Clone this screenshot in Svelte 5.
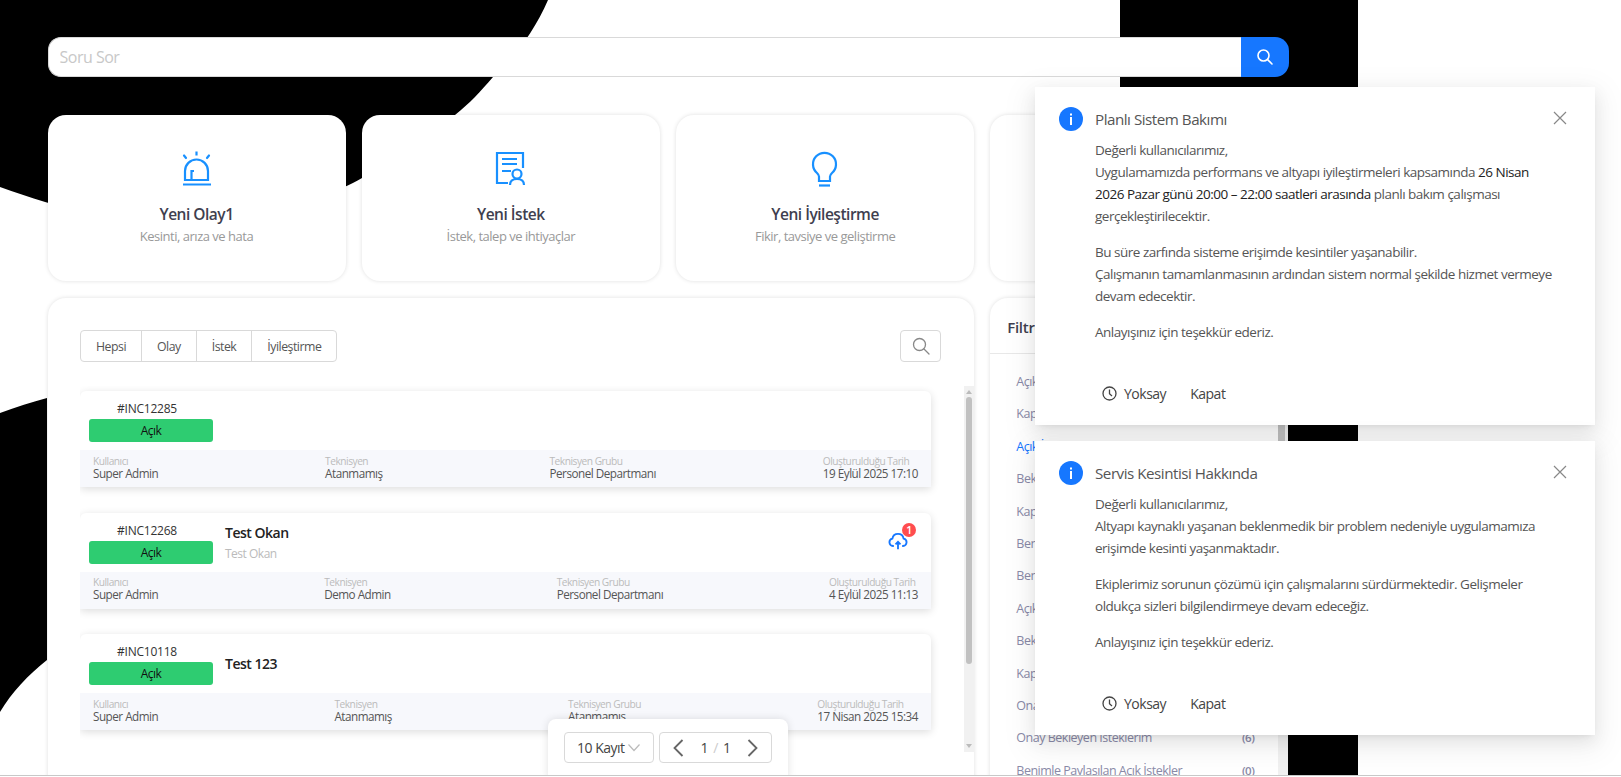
<script>
  const shortcuts = [
    { title: 'Yeni Olay1', sub: 'Kesinti, arıza ve hata', icon: 'alert' },
    { title: 'Yeni İstek', sub: 'İstek, talep ve ihtiyaçlar', icon: 'doc' },
    { title: 'Yeni İyileştirme', sub: 'Fikir, tavsiye ve geliştirme', icon: 'bulb' },
    { title: '', sub: '', icon: '' }
  ];

  const tabs = ['Hepsi', 'Olay', 'İstek', 'İyileştirme'];

  const tickets = [
    { id: '#INC12285', title: '', sub: '', user: 'Super Admin', tech: 'Atanmamış', group: 'Personel Departmanı', date: '19 Eylül 2025 17:10' },
    { id: '#INC12268', title: 'Test Okan', sub: 'Test Okan', user: 'Super Admin', tech: 'Demo Admin', group: 'Personel Departmanı', date: '4 Eylül 2025 11:13', files: 1 },
    { id: '#INC10118', title: 'Test 123', sub: '', user: 'Super Admin', tech: 'Atanmamış', group: 'Atanmamış', date: '17 Nisan 2025 15:34' }
  ];

  const filters = [
    { label: 'Açık Olaylarım', count: 0 },
    { label: 'Kapalı Olaylarım', count: 0 },
    { label: 'Açık İsteklerim', count: 0, active: true },
    { label: 'Bekleyen İsteklerim', count: 0 },
    { label: 'Kapalı İsteklerim', count: 0 },
    { label: 'Benim Açtıklarım', count: 0 },
    { label: 'Benim Kapattıklarım', count: 0 },
    { label: 'Açık İyileştirmeler', count: 0 },
    { label: 'Bekleyen İyileştirmeler', count: 0 },
    { label: 'Kapalı İyileştirmeler', count: 0 },
    { label: 'Onay Bekleyen Olaylarım', count: 0 },
    { label: 'Onay Bekleyen İsteklerim', count: 6 },
    { label: 'Benimle Paylaşılan Açık İstekler', count: 0 }
  ];
</script>

<div class="page">
  <svg class="backdrop" viewBox="0 0 1621 777" width="1621" height="777" aria-hidden="true">
    <path d="M0 0H548C535 30 512 62 493 77C480 92 470 103 455 115C430 145 395 165 362 178C330 196 260 225 190 226C120 226 60 208 0 187Z" />
    <path d="M0 413C16 407 32 402 47 398V660C28 675 12 692 0 712Z" />
    <rect x="1120" y="0" width="238" height="777" />
  </svg>

  <main class="content">
    <div class="ask">
      <input placeholder="Soru Sor" />
      <button aria-label="Ara">
        <svg width="18" height="18" viewBox="0 0 18 18" fill="none" stroke="#fff" stroke-width="1.6">
          <circle cx="7.5" cy="7.5" r="5.5" />
          <path d="M11.6 11.6 16 16" stroke-linecap="round" />
        </svg>
      </button>
    </div>

    <div class="shortcuts">
      {#each shortcuts as s}
        <div class="shortcut">
          {#if s.icon === 'alert'}
            <svg class="glyph" width="30" height="36" viewBox="0 0 30 36">
              <path d="M3 29V20a11.5 11.5 0 0 1 23 0V29Z M9.5 29V20H12" />
              <path d="M1 33.5H29 M14.5 0.5V4.5" />
              <path d="M2 4.5 4 7 M27 4.5 25 7" stroke-linecap="round" />
            </svg>
          {:else if s.icon === 'doc'}
            <svg class="glyph" width="32" height="36" viewBox="0 0 32 36">
              <path d="M13 32H2V2H28V17" />
              <path d="M7 8H22 M7 13H22 M7 20H16" />
              <circle cx="22" cy="23" r="4.5" />
              <path d="M15 34c0-4 3-6 7-6s7 2 7 6" />
            </svg>
          {:else if s.icon === 'bulb'}
            <svg class="glyph" width="32" height="36" viewBox="0 0 32 36">
              <path d="M10 30h11v-4.5c0-1.5 1-2.5 2-3.5a11.5 11.5 0 1 0-15 0c1 1 2 2 2 3.5z" />
              <path d="M10 34.5H21" />
            </svg>
          {/if}
          {#if s.title}
            <div class="shortcut-title">{s.title}</div>
            <div class="shortcut-sub">{s.sub}</div>
          {/if}
        </div>
      {/each}
    </div>

    <div class="columns">
      <section class="tickets">
        <div class="toolbar">
          <div class="tabs">
            {#each tabs as tab}
              <button>{tab}</button>
            {/each}
          </div>
          <button class="find" aria-label="Bul">
            <svg width="18" height="18" viewBox="0 0 18 18" fill="none" stroke="#888" stroke-width="1.3">
              <circle cx="7.5" cy="7.5" r="6" />
              <path d="M12 12 17 17" stroke-linecap="round" />
            </svg>
          </button>
        </div>

        <div class="scroller">
          <div class="list">
            {#each tickets as t}
              <article class="ticket">
                <div class="ticket-head">
                  <div class="ref">
                    <div class="ref-id">{t.id}</div>
                    <div class="status">Açık</div>
                  </div>
                  {#if t.title}
                    <div class="ticket-text">
                      <div class="ticket-title">{t.title}</div>
                      {#if t.sub}<div class="ticket-sub">{t.sub}</div>{/if}
                    </div>
                  {/if}
                  {#if t.files}
                    <div class="upload">
                      <svg width="20" height="20" viewBox="0 0 24 24" fill="none" stroke="#1677ff" stroke-width="2.2">
                        <path d="M7 18H6a4.5 4.5 0 0 1-.7-8.9 6.8 6.8 0 0 1 13.4 0A4.5 4.5 0 0 1 18 18h-1" />
                        <path d="M12 22V13 M9 16l3-3 3 3" />
                      </svg>
                      <span class="count">{t.files}</span>
                    </div>
                  {/if}
                </div>
                <div class="ticket-meta">
                  <div><span>Kullanıcı</span><b>{t.user}</b></div>
                  <div><span>Teknisyen</span><b>{t.tech}</b></div>
                  <div><span>Teknisyen Grubu</span><b>{t.group}</b></div>
                  <div><span>Oluşturulduğu Tarih</span><b>{t.date}</b></div>
                </div>
              </article>
            {/each}
          </div>
          <div class="scrollbar list-bar">
            <i class="up"></i>
            <em></em>
            <i class="down"></i>
          </div>
        </div>
      </section>

      <div class="side">
        <aside class="filters">
          <h3>Filtreler</h3>
          <ul>
            {#each filters as f}
              <li class:active={f.active}><span>{f.label}</span><small>({f.count})</small></li>
            {/each}
          </ul>
        </aside>
        <div class="scrollbar side-bar"><em></em></div>
      </div>
    </div>
  </main>

  <div class="pager-box">
    <div class="size">10 Kayıt
      <svg width="14" height="9" viewBox="0 0 14 9" fill="none" stroke="#bbb" stroke-width="1.2"><path d="M1.5 1.5 7 7.5 12.5 1.5" /></svg>
    </div>
    <div class="pager">
      <svg width="11" height="18" viewBox="0 0 11 18" fill="none" stroke="#666" stroke-width="1.8"><path d="M9.5 1 1.5 9 9.5 17" /></svg>
      <span>1 <u>/</u> 1</span>
      <svg width="11" height="18" viewBox="0 0 11 18" fill="none" stroke="#666" stroke-width="1.8"><path d="M1.5 1 9.5 9 1.5 17" /></svg>
    </div>
  </div>

  <div class="notices">
    <div class="notice">
      <svg class="info" width="24" height="24" viewBox="0 0 24 24">
        <circle cx="12" cy="12" r="12" fill="#1677ff" />
        <rect x="11" y="10" width="2" height="8" fill="#fff" />
        <rect x="11" y="6.5" width="2" height="2" fill="#fff" />
      </svg>
      <svg class="close" width="14" height="14" viewBox="0 0 14 14" stroke="#888" stroke-width="1.2"><path d="M1 1 13 13 M13 1 1 13" /></svg>
      <div class="notice-title">Planlı Sistem Bakımı</div>
      <p>Değerli kullanıcılarımız,<br />Uygulamamızda performans ve altyapı iyileştirmeleri kapsamında <strong>26 Nisan 2026 Pazar günü 20:00 – 22:00 saatleri arasında</strong> planlı bakım çalışması gerçekleştirilecektir.</p>
      <p>Bu süre zarfında sisteme erişimde kesintiler yaşanabilir.<br />Çalışmanın tamamlanmasının ardından sistem normal şekilde hizmet vermeye devam edecektir.</p>
      <p>Anlayışınız için teşekkür ederiz.</p>
      <div class="notice-actions">
        <button>
          <svg width="15" height="15" viewBox="0 0 15 15" fill="none" stroke="#444" stroke-width="1.3"><circle cx="7.5" cy="7.5" r="6.5" /><path d="M7.5 3.5V7.8L10 10" /></svg>
          Yoksay
        </button>
        <button>Kapat</button>
      </div>
    </div>

    <div class="notice">
      <svg class="info" width="24" height="24" viewBox="0 0 24 24">
        <circle cx="12" cy="12" r="12" fill="#1677ff" />
        <rect x="11" y="10" width="2" height="8" fill="#fff" />
        <rect x="11" y="6.5" width="2" height="2" fill="#fff" />
      </svg>
      <svg class="close" width="14" height="14" viewBox="0 0 14 14" stroke="#888" stroke-width="1.2"><path d="M1 1 13 13 M13 1 1 13" /></svg>
      <div class="notice-title">Servis Kesintisi Hakkında</div>
      <p>Değerli kullanıcılarımız,<br />Altyapı kaynaklı yaşanan beklenmedik bir problem nedeniyle uygulamamıza erişimde kesinti yaşanmaktadır.</p>
      <p>Ekiplerimiz sorunun çözümü için çalışmalarını sürdürmektedir. Gelişmeler oldukça sizleri bilgilendirmeye devam edeceğiz.</p>
      <p>Anlayışınız için teşekkür ederiz.</p>
      <div class="notice-actions">
        <button>
          <svg width="15" height="15" viewBox="0 0 15 15" fill="none" stroke="#444" stroke-width="1.3"><circle cx="7.5" cy="7.5" r="6.5" /><path d="M7.5 3.5V7.8L10 10" /></svg>
          Yoksay
        </button>
        <button>Kapat</button>
      </div>
    </div>
  </div>
</div>

<style>
  :global(body) {
    background: #fff;
    overflow: hidden;
  }

  .page {
    position: relative;
    width: 1621px;
    height: 775px;
    overflow: hidden;
    border-bottom: 1px solid #c8c8c8;
    font-family: "Open Sans", "Noto Sans", sans-serif;
    font-size: 14px;
    letter-spacing: -0.035em;
    color: #444;
  }

  button {
    font: inherit;
    letter-spacing: inherit;
    color: inherit;
    background: none;
    border: none;
    padding: 0;
  }

  .backdrop {
    position: absolute;
    top: 0;
    left: 0;
    fill: #000;
  }

  .content {
    position: relative;
    width: 1241px;
    padding: 37px 0 0 47.5px;
  }

  .ask {
    display: flex;
    height: 40px;
    margin-bottom: 38px;
  }

  .ask input {
    flex: 1;
    min-width: 0;
    box-sizing: border-box;
    padding: 0 11px;
    border: 1px solid #d9d9d9;
    border-right: none;
    border-radius: 13px 0 0 13px;
    outline: none;
    background: #fff;
    font: inherit;
    font-size: 16px;
    letter-spacing: inherit;
  }

  .ask input::placeholder {
    color: #c8c8c8;
  }

  .ask button {
    display: flex;
    align-items: center;
    justify-content: center;
    width: 48px;
    background: #1677ff;
    border-radius: 0 14px 14px 0;
  }

  .shortcuts {
    display: grid;
    grid-template-columns: repeat(4, 298px);
    gap: 16.3px;
    margin-bottom: 17px;
  }

  .shortcut {
    box-sizing: border-box;
    display: flex;
    flex-direction: column;
    align-items: center;
    height: 166px;
    padding-top: 36px;
    background: #fff;
    border-radius: 18px;
    box-shadow: 0 0 4px rgba(0, 0, 0, 0.13);
  }

  .glyph {
    fill: none;
    stroke: #1890ff;
    stroke-width: 2.2;
    flex: none;
  }

  .shortcut-title {
    margin-top: 16px;
    font-size: 15.5px;
    line-height: 22px;
    font-weight: 600;
    color: #3f3f4f;
  }

  .shortcut-sub {
    margin-top: 2px;
    font-size: 13px;
    line-height: 18px;
    color: #999;
  }

  .columns {
    display: flex;
    gap: 16.3px;
  }

  .tickets {
    box-sizing: border-box;
    width: 926.5px;
    height: 500px;
    padding: 32px 0 0 32.5px;
    background: #fff;
    border-radius: 18px;
    box-shadow: 0 0 4px rgba(0, 0, 0, 0.13);
  }

  .toolbar {
    display: flex;
    justify-content: space-between;
    width: 861px;
    height: 32px;
  }

  .tabs {
    display: flex;
    border: 1px solid #d9d9d9;
    border-radius: 4px;
  }

  .tabs button {
    padding: 0 15px;
    border-left: 1px solid #d9d9d9;
    font-size: 12.3px;
    color: #555;
  }

  .tabs button:first-child {
    border-left: none;
  }

  .find {
    display: flex;
    align-items: center;
    justify-content: center;
    width: 41px;
    border: 1px solid #d9d9d9;
    border-radius: 4px;
  }

  .scroller {
    display: flex;
    justify-content: space-between;
    height: 366px;
    margin-top: 24px;
    overflow: hidden;
  }

  .list {
    display: flex;
    flex-direction: column;
    gap: 25.5px;
    box-sizing: border-box;
    width: 860px;
    padding: 5px 0 0 0;
  }

  .ticket {
    flex: none;
    width: 851px;
    height: 96px;
    display: flex;
    flex-direction: column;
    background: #fff;
    border-radius: 6px 6px 0 0;
    box-shadow: 0 2px 8px rgba(0, 0, 0, 0.14);
  }

  .ticket-head {
    flex: 1;
    display: flex;
    align-items: center;
    gap: 12px;
    padding: 0 9px;
  }

  .ref {
    width: 124px;
    flex: none;
    text-align: center;
  }

  .ref-id {
    padding-right: 8px;
    font-size: 12px;
    line-height: 20px;
    color: #333;
    letter-spacing: -0.02em;
  }

  .status {
    height: 23px;
    line-height: 23px;
    background: #2ecc71;
    border-radius: 3px;
    font-size: 12px;
    color: #111;
  }

  .ticket-text {
    flex: 1;
  }

  .ticket-title {
    font-size: 14px;
    line-height: 20px;
    font-weight: 600;
    color: #222;
  }

  .ticket-sub {
    margin-top: 3px;
    font-size: 12px;
    line-height: 16px;
    color: #bbb;
  }

  .upload {
    position: relative;
    display: flex;
    margin: -2px 14px 0 0;
  }

  .count {
    position: absolute;
    top: -8px;
    right: -8px;
    width: 14px;
    height: 14px;
    border-radius: 50%;
    background: #ff4d4f;
    color: #fff;
    font-size: 10.5px;
    font-weight: 600;
    line-height: 14px;
    text-align: center;
  }

  .ticket-meta {
    display: flex;
    justify-content: space-between;
    align-items: center;
    box-sizing: border-box;
    height: 37px;
    padding: 0 13px 2px;
    background: #f7f8fc;
  }

  .ticket-meta span,
  .ticket-meta b {
    display: block;
    white-space: nowrap;
  }

  .ticket-meta span {
    font-size: 10.2px;
    line-height: 11px;
    color: #bbb;
  }

  .ticket-meta b {
    font-size: 11.7px;
    line-height: 13px;
    font-weight: 400;
    color: #555;
  }

  .scrollbar {
    flex: none;
    box-sizing: border-box;
    width: 10px;
    background: #f1f1f1;
  }

  .scrollbar em {
    display: block;
    background: #c1c1c1;
  }

  .list-bar {
    display: flex;
    flex-direction: column;
    align-items: center;
    padding: 4px 0;
  }

  .list-bar em {
    width: 6px;
    height: 267px;
    margin: 3px auto auto;
    border-radius: 3px;
  }

  .list-bar i {
    width: 0;
    height: 0;
    border-left: 3.5px solid transparent;
    border-right: 3.5px solid transparent;
  }

  .list-bar .up {
    border-bottom: 4px solid #bbb;
  }

  .list-bar .down {
    border-top: 4px solid #bbb;
  }

  .side {
    display: flex;
    width: 298px;
    height: 500px;
  }

  .filters {
    flex: 1;
    background: #fff;
    border-radius: 18px 0 0 0;
    box-shadow: 0 0 4px rgba(0, 0, 0, 0.13);
  }

  .filters h3 {
    margin: 0;
    padding: 0 17px;
    height: 56px;
    line-height: 58px;
    font-size: 15px;
    font-weight: 600;
    letter-spacing: -0.02em;
    color: #3f3f4f;
    border-bottom: 1px solid #e8e8e8;
    box-sizing: border-box;
  }

  .filters ul {
    list-style: none;
    margin: 0;
    padding: 12px 24px 0 26px;
  }

  .filters li {
    display: flex;
    justify-content: space-between;
    height: 32.4px;
    line-height: 32.4px;
    font-size: 12.5px;
    white-space: nowrap;
    color: #8a8aa8;
  }

  .filters li.active {
    color: #1677ff;
  }

  .filters small {
    font-size: 11.5px;
    font-weight: 600;
  }

  .side-bar em {
    width: 7px;
    height: 150px;
  }

  .pager-box {
    position: absolute;
    left: 548px;
    top: 719px;
    box-sizing: border-box;
    display: flex;
    gap: 5px;
    width: 240px;
    height: 60px;
    padding: 13px 16px;
    background: #fff;
    border-radius: 8px 8px 0 0;
    box-shadow: 0 0 8px rgba(0, 0, 0, 0.12);
  }

  .size,
  .pager {
    box-sizing: border-box;
    display: flex;
    align-items: center;
    height: 31px;
    border: 1px solid #d9d9d9;
    border-radius: 4px;
    color: #444;
    font-size: 14px;
  }

  .size {
    width: 90px;
    padding: 0 12px;
    justify-content: space-between;
    white-space: nowrap;
  }

  .pager {
    width: 113px;
    padding: 0 13px;
    justify-content: space-between;
  }

  .pager u {
    text-decoration: none;
    color: #ccc;
    margin: 0 2px;
  }

  .notices {
    position: absolute;
    top: 87px;
    left: 1035px;
    width: 560px;
    display: flex;
    flex-direction: column;
    gap: 16px;
  }

  .notice {
    position: relative;
    box-sizing: border-box;
    padding: 20px 36px 0 60px;
    background: #fff;
    box-shadow: 0 6px 16px rgba(0, 0, 0, 0.08), 0 3px 6px -4px rgba(0, 0, 0, 0.12), 0 9px 28px 8px rgba(0, 0, 0, 0.05);
  }

  .info {
    position: absolute;
    top: 20px;
    left: 24px;
  }

  .close {
    position: absolute;
    top: 24px;
    left: 518px;
  }

  .notice-title {
    height: 24px;
    line-height: 24px;
    font-size: 15.2px;
    color: #555;
    margin-bottom: 8px;
  }

  .notice p {
    margin: 0 0 14px;
    line-height: 22px;
    font-size: 13.5px;
    color: #555;
  }

  .notice strong {
    font-weight: 400;
    color: #222;
  }

  .notice-actions {
    display: flex;
    gap: 24px;
    height: 48px;
    margin-top: 34px;
    padding: 0 0 0 7px;
    box-sizing: border-box;
  }

  .notice-actions button {
    display: flex;
    align-items: center;
    gap: 7px;
    height: 32px;
    color: #444;
    font-size: 14px;
  }
</style>
